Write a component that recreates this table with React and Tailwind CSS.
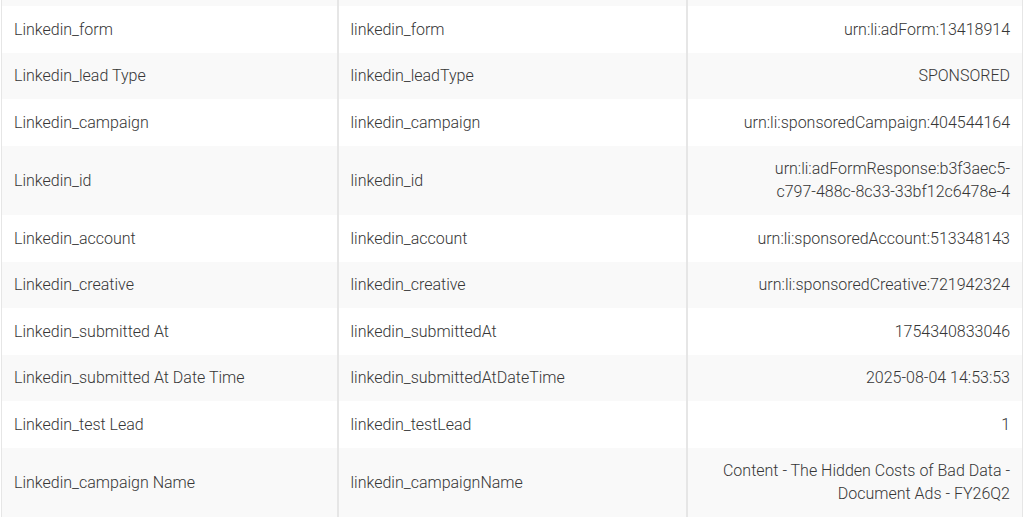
import React from 'react';

const rows = [
  { label: 'Linkedin_form', key: 'linkedin_form', value: 'urn:li:adForm:13418914' },
  { label: 'Linkedin_lead Type', key: 'linkedin_leadType', value: 'SPONSORED' },
  { label: 'Linkedin_campaign', key: 'linkedin_campaign', value: 'urn:li:sponsoredCampaign:404544164' },
  {
    label: 'Linkedin_id',
    key: 'linkedin_id',
    value: (
      <>
        urn:li:adFormResponse:b3f3aec5-
        <span className="whitespace-nowrap">c797-488c-8c33-33bf12c6478e-4</span>
      </>
    ),
  },
  { label: 'Linkedin_account', key: 'linkedin_account', value: 'urn:li:sponsoredAccount:513348143' },
  { label: 'Linkedin_creative', key: 'linkedin_creative', value: 'urn:li:sponsoredCreative:721942324' },
  { label: 'Linkedin_submitted At', key: 'linkedin_submittedAt', value: '1754340833046' },
  { label: 'Linkedin_submitted At Date Time', key: 'linkedin_submittedAtDateTime', value: '2025-08-04 14:53:53' },
  { label: 'Linkedin_test Lead', key: 'linkedin_testLead', value: '1' },
  {
    label: 'Linkedin_campaign Name',
    key: 'linkedin_campaignName',
    value: 'Content - The Hidden Costs of Bad Data - Document Ads - FY26Q2',
  },
];

const App = () => {
  return (
    <div className="w-[1024px] h-[520px] overflow-hidden bg-white px-px font-['Roboto',sans-serif] font-light text-[16px] text-[#363636]">
      <table className="w-full table-fixed border-collapse border-x border-[#e6e6e6]">
        <colgroup>
          <col className="w-[336px]" />
          <col className="w-[349px]" />
          <col />
        </colgroup>
        <tbody>
          <tr className="bg-[#f9f9f9] h-[6px]">
            <td className="p-0" />
            <td className="p-0 border-l-2 border-[#e6e6e6]" />
            <td className="p-0 border-l-2 border-[#e6e6e6]" />
          </tr>
          {rows.map((row, i) => (
            <tr key={row.key} className={i % 2 === 0 ? 'bg-white' : 'bg-[#f9f9f9]'}>
              <td className="px-3 py-[11.75px] leading-[23px] align-middle">{row.label}</td>
              <td className="px-3 py-[11.75px] leading-[23px] align-middle border-l-2 border-[#e6e6e6]">
                {row.key}
              </td>
              <td className="px-3 py-[11.75px] leading-[23px] align-middle text-right border-l-2 border-[#e6e6e6]">
                {row.value}
              </td>
            </tr>
          ))}
        </tbody>
      </table>
    </div>
  );
};

export default App;
